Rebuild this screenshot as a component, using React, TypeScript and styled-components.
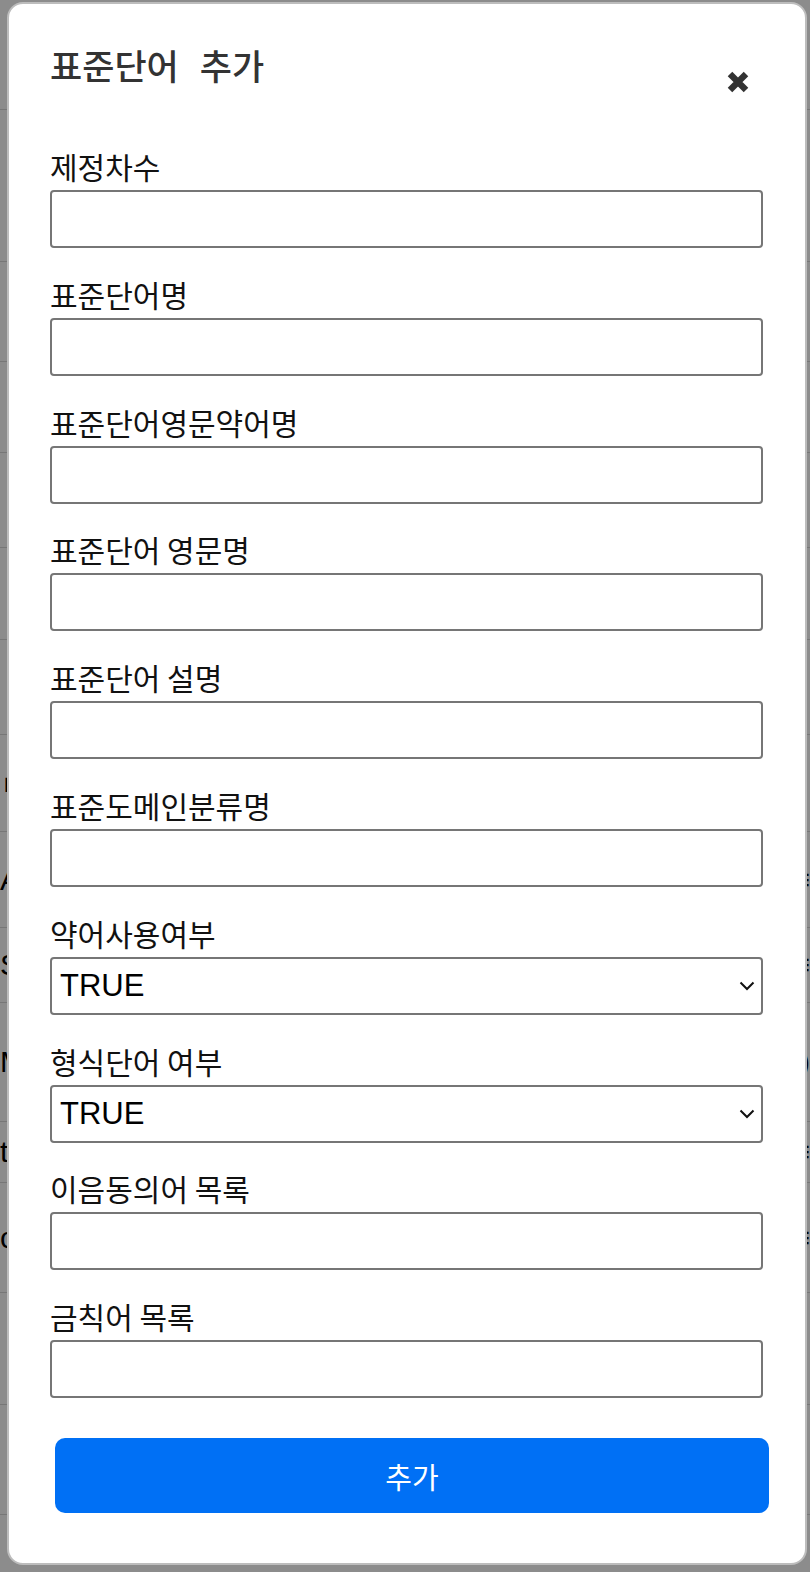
import React from 'react';
import styled, { createGlobalStyle } from 'styled-components';

const GlobalStyle = createGlobalStyle`
  * {
    box-sizing: border-box;
  }
  html,
  body {
    margin: 0;
    padding: 0;
  }
  body {
    font-family: 'Noto Sans CJK KR', 'Noto Sans', sans-serif;
    background: #ffffff;
    overflow: hidden;
  }
`;

interface Field {
  label: string;
  kind: 'input' | 'select';
}

const fields: Field[] = [
  { label: '제정차수', kind: 'input' },
  { label: '표준단어명', kind: 'input' },
  { label: '표준단어영문약어명', kind: 'input' },
  { label: '표준단어 영문명', kind: 'input' },
  { label: '표준단어 설명', kind: 'input' },
  { label: '표준도메인분류명', kind: 'input' },
  { label: '약어사용여부', kind: 'select' },
  { label: '형식단어 여부', kind: 'select' },
  { label: '이음동의어 목록', kind: 'input' },
  { label: '금칙어 목록', kind: 'input' },
];

// rows of the list page sitting behind the dialog
const bgRows = [
  { h: 110, left: '', right: '' },
  { h: 152, left: '', right: '' },
  { h: 100, left: '', right: '' },
  { h: 91, left: '', right: '' },
  { h: 95, left: '', right: '' },
  { h: 92, left: '', right: '' },
  { h: 95, left: '', right: '' },
  { h: 97, left: 'ㄴ', right: '' },
  { h: 96, left: 'A', right: '≡' },
  { h: 75, left: 'S', right: '≡' },
  { h: 119, left: 'M', right: ')' },
  { h: 61, left: 't', right: '≡' },
  { h: 110, left: 'c', right: '≡' },
  { h: 112, left: '', right: '' },
  { h: 110, left: '', right: '' },
];

const Chevron = () => (
  <svg width="16" height="10" viewBox="0 0 16 10" fill="none">
    <path d="M1.5 1.5 L8 8 L14.5 1.5" stroke="#111" strokeWidth="2" />
  </svg>
);

const CloseIcon = () => (
  <svg width="24" height="24" viewBox="0 0 24 24" fill="none">
    <path d="M4 4 L20 20 M20 4 L4 20" stroke="#333" strokeWidth="6.4" />
  </svg>
);

const App: React.FC = () => {
  return (
    <>
      <GlobalStyle />
      <BgPage>
        {bgRows.map((row, i) => (
          <BgRow key={`bg-${i}`} $h={row.h}>
            <BgCell>{row.left}</BgCell>
            <BgCell>{row.right}</BgCell>
          </BgRow>
        ))}
      </BgPage>
      <Overlay>
        <Modal>
          <Header>
            <Title>표준단어 추가</Title>
            <CloseButton type="button" aria-label="닫기">
              <CloseIcon />
            </CloseButton>
          </Header>
          <Form>
            {fields.map((field) => (
              <FieldBox key={field.label}>
                <Label>{field.label}</Label>
                {field.kind === 'select' ? (
                  <SelectWrap>
                    <Select defaultValue="TRUE">
                      <option value="TRUE">TRUE</option>
                      <option value="FALSE">FALSE</option>
                    </Select>
                    <ChevronSlot>
                      <Chevron />
                    </ChevronSlot>
                  </SelectWrap>
                ) : (
                  <Input type="text" />
                )}
              </FieldBox>
            ))}
          </Form>
          <SubmitButton type="button">추가</SubmitButton>
        </Modal>
      </Overlay>
    </>
  );
};

const BgPage = styled.div`
  height: 1572px;
  overflow: hidden;
  font-family: 'Liberation Sans', 'Noto Sans CJK KR', sans-serif;
`;
const BgRow = styled.div<{ $h: number }>`
  height: ${({ $h }) => $h}px;
  border-bottom: 1px solid #d9d9d9;
  display: flex;
  justify-content: space-between;
  align-items: center;
  font-size: 30px;
  color: #000;
`;
const BgCell = styled.span`
  display: block;
`;
const Overlay = styled.div`
  position: fixed;
  inset: 0;
  background: rgba(0, 0, 0, 0.45);
  padding: 2px 0 0 7px;
`;
const Modal = styled.div`
  width: 800px;
  height: 1563px;
  background: #ffffff;
  border: 2px solid #bdbdbd;
  border-radius: 16px;
  padding: 43px 42px 0 41px;
  display: flex;
  flex-direction: column;
`;
const Header = styled.div`
  display: flex;
  justify-content: space-between;
  align-items: flex-start;
  height: 47px;
`;
const Title = styled.h2`
  margin: 0;
  font-size: 35px;
  line-height: 35px;
  font-weight: 500;
  color: #333;
  word-spacing: 13px;
`;
const CloseButton = styled.button`
  margin: 23px 13px 0 0;
  padding: 0;
  border: none;
  background: none;
  width: 24px;
  height: 24px;
  display: flex;
  cursor: pointer;
`;
const Form = styled.div`
  margin-top: 56px;
  display: flex;
  flex-direction: column;
  gap: 29.8px;
`;
const FieldBox = styled.div`
  display: flex;
  flex-direction: column;
`;
const Label = styled.label`
  font-size: 30px;
  line-height: 34px;
  color: #111;
  margin-bottom: 6px;
  position: relative;
  top: -1px;
`;
const Input = styled.input`
  height: 58px;
  width: 100%;
  border: 2px solid #767676;
  border-radius: 4px;
  padding: 0 10px;
  font-size: 28px;
  background: #fff;
`;
const SelectWrap = styled.div`
  position: relative;
`;
const Select = styled.select`
  appearance: none;
  height: 58px;
  width: 100%;
  border: 2px solid #767676;
  border-radius: 4px;
  padding: 0 40px 0 8px;
  font-family: 'Liberation Sans', Arial, sans-serif;
  font-size: 31px;
  color: #000;
  background: #fff;
`;
const ChevronSlot = styled.span`
  position: absolute;
  right: 8px;
  top: 24px;
  display: flex;
  pointer-events: none;
`;
const SubmitButton = styled.button`
  margin: 40px 0 0 5px;
  width: calc(100% + 1px);
  height: 75px;
  border: none;
  border-radius: 10px;
  background: #0070f5;
  color: #fff;
  font-family: 'Noto Sans CJK KR', sans-serif;
  font-size: 29px;
  cursor: pointer;
`;

export default App;
